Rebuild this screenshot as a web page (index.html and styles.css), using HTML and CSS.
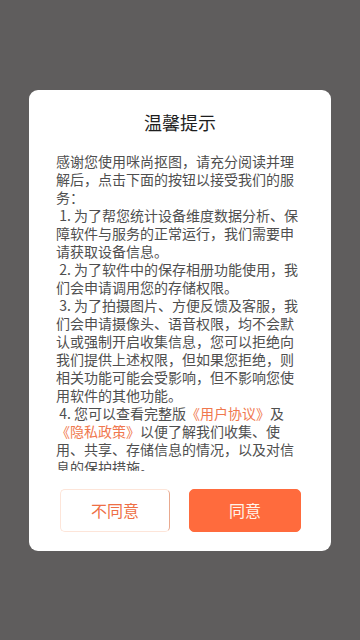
FILE: index.html
```html
<!DOCTYPE html>
<html lang="zh-CN">
<head>
<meta charset="utf-8">
<meta name="viewport" content="width=device-width, initial-scale=1">
<title>温馨提示</title>
<link rel="stylesheet" href="styles.css">
</head>
<body>
<div class="overlay">
  <div class="dialog">
    <h1 class="title">温馨提示</h1>
    <div class="content">
      <p>感谢您使用咪尚抠图，请充分阅读并理解后，点击下面的按钮以接受我们的服务：</p>
      <p>&nbsp;1. 为了帮您统计设备维度数据分析、保障软件与服务的正常运行，我们需要申请获取设备信息。</p>
      <p>&nbsp;2. 为了软件中的保存相册功能使用，我们会申请调用您的存储权限。</p>
      <p>&nbsp;3. 为了拍摄图片、方便反馈及客服，我们会申请摄像头、语音权限，均不会默认或强制开启收集信息，您可以拒绝向我们提供上述权限，但如果您拒绝，则相关功能可能会受影响，但不影响您使用软件的其他功能。</p>
      <p>&nbsp;4. 您可以查看完整版<span class="link">《用户协议》</span>及<span class="link">《隐私政策》</span>以便了解我们收集、使用、共享、存储信息的情况，以及对信息的保护措施。</p>
    </div>
    <div class="actions">
      <button class="btn btn-ghost">不同意</button>
      <button class="btn btn-primary">同意</button>
    </div>
  </div>
</div>
</body>
</html>
```
FILE: styles.css
```css
html, body {
  margin: 0;
  padding: 0;
}
body {
  width: 360px;
  height: 640px;
  background: #5f5d5d;
  font-family: "Noto Sans CJK SC", "Noto Sans", sans-serif;
}
.overlay {
  height: 640px;
  display: flex;
  align-items: center;
  justify-content: center;
}
.dialog {
  width: 302px;
  height: 461px;
  box-sizing: border-box;
  background: #ffffff;
  border-radius: 9px;
  padding: 20px 0 19px;
  display: flex;
  flex-direction: column;
}
.title {
  margin: 0;
  font-size: 18px;
  line-height: 24px;
  font-weight: 400;
  color: #1e1e1e;
  text-align: center;
}
.content {
  margin-top: 18px;
  height: 319px;
  overflow: hidden;
  padding: 0 33px 0 27px;
  color: #4f4f4f;
  font-size: 14px;
  line-height: 18px;
}
.content p {
  margin: 0;
}
.link {
  color: #f0784e;
}
.actions {
  margin-top: 18px;
  display: flex;
  gap: 19px;
  padding: 0 30px 0 31px;
}
.btn {
  flex: 1;
  height: 43px;
  border-radius: 5px;
  font-family: inherit;
  font-size: 16px;
  padding: 0;
  cursor: pointer;
}
.btn-ghost {
  background: #ffffff;
  border: 1px solid #fde5d9;
  border-right-color: #e9a98f;
  color: #ee6f45;
  flex-basis: 110px;
  flex-grow: 0;
}
.btn-primary {
  background: #ff6b3d;
  border: 1px solid #ff6b3d;
  color: #fff4ea;
}
```
